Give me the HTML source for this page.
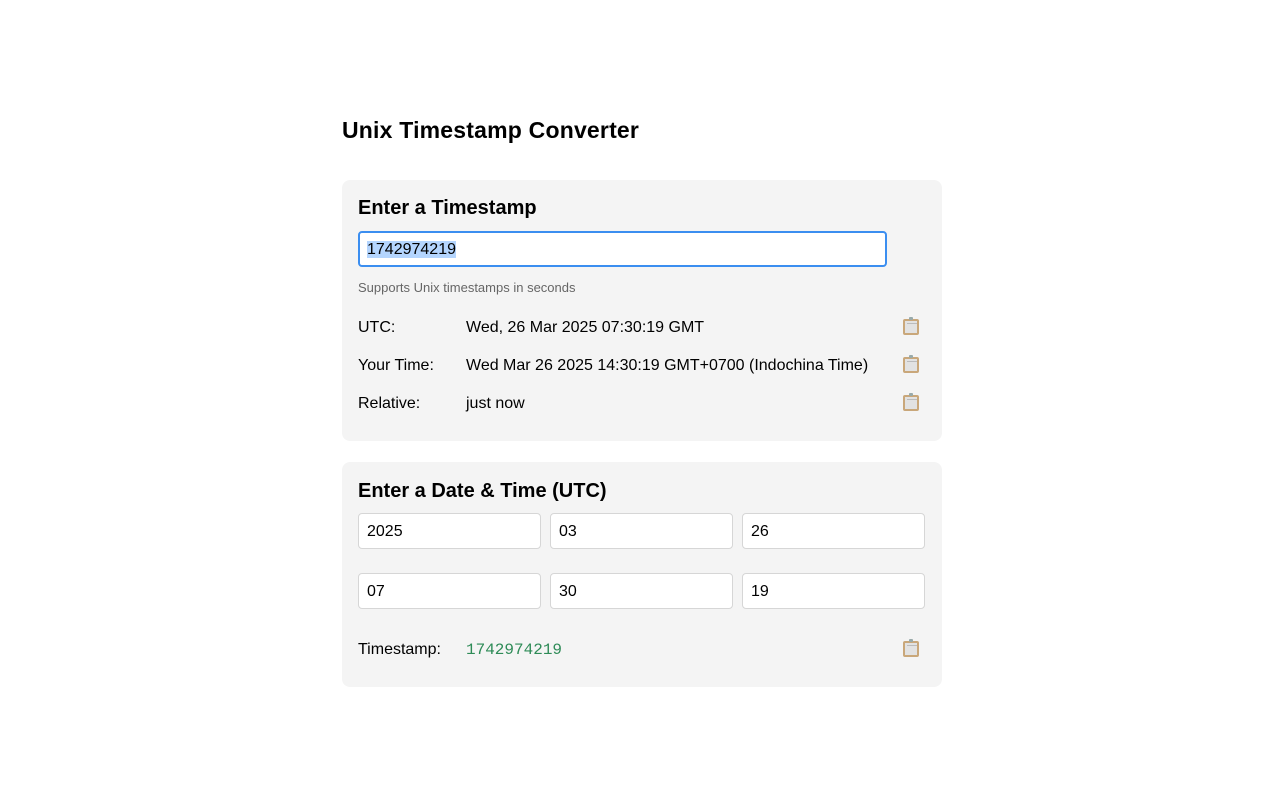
<!DOCTYPE html>
<html><head><meta charset="utf-8"><style>
body{margin:0;background:#fff;font-family:"Liberation Sans",Arial,sans-serif;color:#000}
.wrap{position:absolute;left:342px;top:0;width:600px}
h1{position:absolute;top:117px;left:0;margin:0;font-size:23px;letter-spacing:0.2px;font-weight:bold;white-space:nowrap}
.card{position:absolute;left:0;width:600px;background:#f4f4f4;border-radius:8px}
h2{position:absolute;left:16px;margin:0;font-size:20px;font-weight:bold}
.inp{position:absolute;box-sizing:border-box;background:#fff;border:1px solid #d6d6d6;border-radius:4px;font-size:16px;padding-left:8px;line-height:35px}
.row{position:absolute;left:16px;width:568px;font-size:16px;height:20px;line-height:20px}
.row .l{position:absolute;left:0}
.row .v{position:absolute;left:108px;white-space:nowrap}
.clip{position:absolute;left:545px;top:1px;border:2px solid #c9a77a;border-radius:2px;box-sizing:border-box;width:16px;height:16px;background:linear-gradient(#bbb,#bbb) 2px 2px/10px 1px no-repeat,#e2e2e2}
.clip:after{content:"";position:absolute;left:4px;top:-4px;width:4px;height:3px;background:#9aa;border-radius:1px}
</style></head><body>
<div class="wrap">
<h1>Unix Timestamp Converter</h1>
<div class="card" style="top:180px;height:261px">
<h2 style="top:17px">Enter a Timestamp</h2>
<div class="inp" style="left:16px;top:51px;width:529px;height:36px;border:2px solid #3b8ef0;padding-left:7px;line-height:33px"><span style="background:#b4d5fe">1742974219</span></div>
<div style="position:absolute;left:16px;top:100px;font-size:13px;color:#666">Supports Unix timestamps in seconds</div>
<div class="row" style="top:138px"><span class="l">UTC:</span><span class="v">Wed, 26 Mar 2025 07:30:19 GMT</span><span class="clip"></span></div>
<div class="row" style="top:176px"><span class="l">Your Time:</span><span class="v">Wed Mar 26 2025 14:30:19 GMT+0700 (Indochina Time)</span><span class="clip"></span></div>
<div class="row" style="top:214px"><span class="l">Relative:</span><span class="v">just now</span><span class="clip"></span></div>
</div>
<div class="card" style="top:462px;height:225px">
<h2 style="top:18px">Enter a Date &amp; Time (UTC)</h2>
<div class="inp" style="left:16px;top:51px;width:183px;height:36px">2025</div>
<div class="inp" style="left:208px;top:51px;width:183px;height:36px">03</div>
<div class="inp" style="left:400px;top:51px;width:183px;height:36px">26</div>
<div class="inp" style="left:16px;top:111px;width:183px;height:36px">07</div>
<div class="inp" style="left:208px;top:111px;width:183px;height:36px">30</div>
<div class="inp" style="left:400px;top:111px;width:183px;height:36px">19</div>
<div class="row" style="top:178px"><span class="l">Timestamp:</span><span class="v" style="font-family:'Liberation Mono',monospace;color:#2e8b57;font-size:16px">1742974219</span><span class="clip"></span></div>
</div>
</div>
</body></html>
